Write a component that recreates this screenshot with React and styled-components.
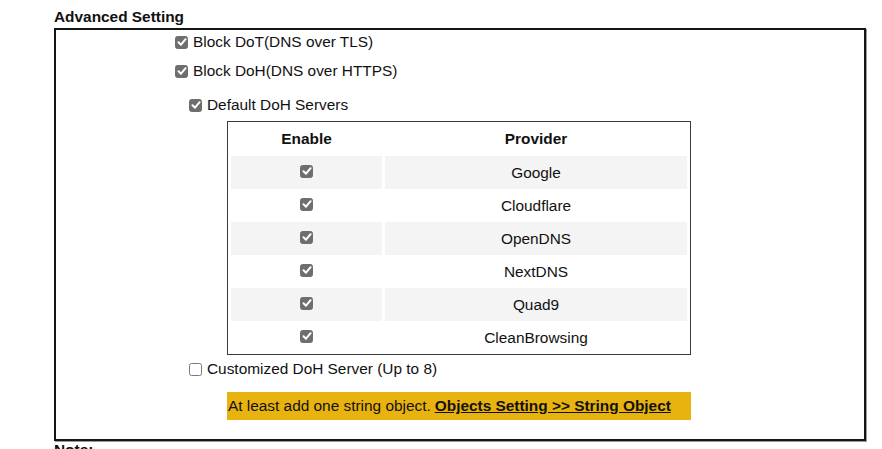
import styled, { createGlobalStyle } from "styled-components";

const GlobalStyle = createGlobalStyle`
  body {
    margin: 0;
    background: #fff;
    font-family: "Liberation Sans", Arial, sans-serif;
    color: #111;
  }
`;

const Page = styled.div`
  padding: 8px 0 0 54px;
  width: 812px;
`;

const Title = styled.div`
  font-weight: bold;
  font-size: 15.4px;
  line-height: 18px;
`;

const Box = styled.div`
  margin-top: 2px;
  border: 2px solid #151515;
  box-shadow: 1px 1px 0 #9a9a9a;
  padding: 0 0 19px 119px;
  display: flex;
  flex-direction: column;
`;

const Row = styled.label`
  display: flex;
  align-items: center;
  gap: 5px;
  height: 22px;
  font-size: 15.4px;
  margin-left: ${(p) => (p.$indent ? "14px" : "0")};
  margin-top: ${(p) => p.$top || 0}px;
`;

const Box13 = styled.span`
  width: 13px;
  height: 13px;
  box-sizing: border-box;
  border-radius: 2.5px;
  display: inline-flex;
  align-items: center;
  justify-content: center;
  flex-shrink: 0;
  background: ${(p) => (p.$on ? "#6e6e6e" : "#fff")};
  border: 1px solid ${(p) => (p.$on ? "#6e6e6e" : "#7a7a7a")};
`;

const Check = ({ on = true }) => (
  <Box13 $on={on}>
    {on && (
      <svg width="10" height="10" viewBox="0 0 10 10">
        <path d="M1.5 5.3 L4 7.7 L8.6 2.2" fill="none" stroke="#fff" strokeWidth="2" strokeLinecap="round" strokeLinejoin="round" />
      </svg>
    )}
  </Box13>
);

const Table = styled.table`
  margin: 5px 0 0 52px;
  width: 464px;
  border: 1px solid #3a3a3a;
  border-collapse: separate;
  border-spacing: 3px 0;
  font-size: 15.4px;
`;

const Th = styled.th`
  height: 34px;
  padding: 0;
  font-weight: bold;
  text-align: center;
  width: ${(p) => p.$w || "auto"};
`;

const Td = styled.td`
  height: 33px;
  padding: 0;
  text-align: center;
  vertical-align: middle;
  background: ${(p) => (p.$shade ? "#f4f4f4" : "#fff")};
`;

const CellCheck = styled.div`
  display: flex;
  justify-content: center;
  padding-bottom: 3px;
`;

const Notice = styled.div`
  margin: 12px 0 0 52px;
  width: 464px;
  height: 28px;
  background: #e8b30f;
  font-size: 15.4px;
  display: flex;
  align-items: center;
  padding-left: 1px;
  box-sizing: border-box;
`;

const Link = styled.a`
  font-weight: bold;
  color: #111;
  text-decoration: underline;
  margin-left: 4px;
`;

const Note = styled.div`
  font-weight: bold;
  font-size: 15.4px;
  line-height: 16px;
  margin-top: 1px;
`;

const providers = ["Google", "Cloudflare", "OpenDNS", "NextDNS", "Quad9", "CleanBrowsing"];

export default function App() {
  return (
    <>
      <GlobalStyle />
      <Page>
        <Title>Advanced Setting</Title>
        <Box>
          <Row $top={1}>
            <Check />
            Block DoT(DNS over TLS)
          </Row>
          <Row $top={7}>
            <Check />
            Block DoH(DNS over HTTPS)
          </Row>
          <Row $indent $top={12}>
            <Check />
            Default DoH Servers
          </Row>
          <Table>
            <thead>
              <tr>
                <Th $w="151px">Enable</Th>
                <Th>Provider</Th>
              </tr>
            </thead>
            <tbody>
              {providers.map((name, i) => (
                <tr key={name}>
                  <Td $shade={i % 2 === 0}>
                    <CellCheck>
                      <Check />
                    </CellCheck>
                  </Td>
                  <Td $shade={i % 2 === 0}>{name}</Td>
                </tr>
              ))}
            </tbody>
          </Table>
          <Row $indent $top={3}>
            <Check on={false} />
            Customized DoH Server (Up to 8)
          </Row>
          <Notice>
            At least add one string object.
            <Link href="#">Objects Setting &gt;&gt; String Object</Link>
          </Notice>
        </Box>
        <Note>Note:</Note>
      </Page>
    </>
  );
}
